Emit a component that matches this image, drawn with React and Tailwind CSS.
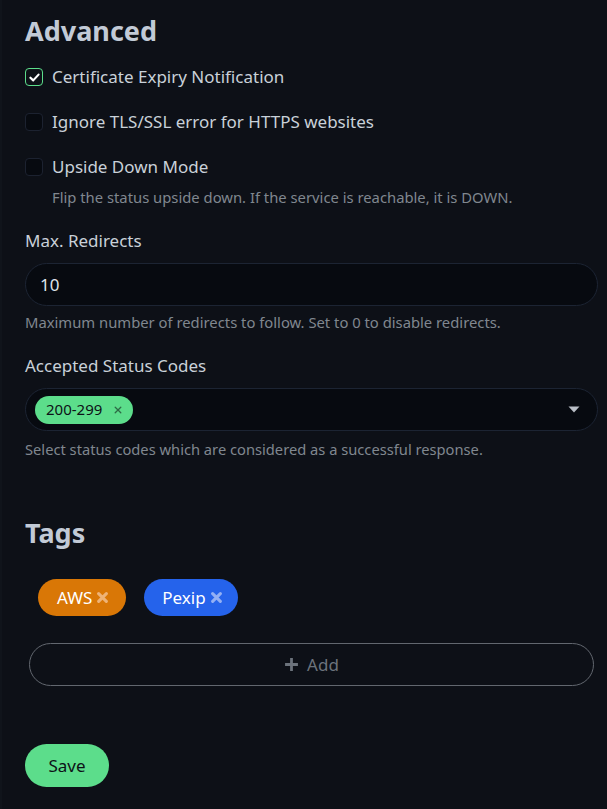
import React from "react";

function Check({ checked, label }) {
  return (
    <div className="flex items-center h-[24px]">
      <div
        className={
          "w-[18px] h-[18px] rounded-[4px] border flex items-center justify-center " +
          (checked ? "border-[#5cdd8b] bg-[#0d1117]" : "border-[#1c2230] bg-[#070a10]")
        }
      >
        {checked && (
          <svg width="11" height="9" viewBox="0 0 12 10">
            <path d="M1.5 5.2 L4.6 8.2 L10.5 1.8" fill="none" stroke="#ffffff" strokeWidth="2.4" strokeLinecap="round" strokeLinejoin="round" />
          </svg>
        )}
      </div>
      <span className="ml-[9px] text-[17px] leading-[24px] text-[#c9d1d9]">{label}</span>
    </div>
  );
}

function XIcon({ color, size = 10, w = 2.6 }) {
  return (
    <svg width={size} height={size} viewBox="0 0 10 10">
      <path d="M1.5 1.5 L8.5 8.5 M8.5 1.5 L1.5 8.5" stroke={color} strokeWidth={w} strokeLinecap="round" />
    </svg>
  );
}

export default function App() {
  return (
    <div
      className="w-[607px] h-[809px] bg-[#0d1017] border-l-2 border-[#10141b] overflow-hidden"
      style={{ fontFamily: '"Noto Sans", "Open Sans", sans-serif' }}
    >
      <div className="pl-[23px] pr-[9px]">
        <h4 className="pt-[11px] text-[27px] font-bold text-[#c2cad6] leading-[40px]">Advanced</h4>

        <div className="mt-[14px]">
          <Check checked label="Certificate Expiry Notification" />
        </div>
        <div className="mt-[21px]">
          <Check label="Ignore TLS/SSL error for HTTPS websites" />
        </div>
        <div className="mt-[21px]">
          <Check label="Upside Down Mode" />
          <div className="ml-[27px] mt-[8px] text-[14.8px] text-[#80878f] leading-[20px]">
            Flip the status upside down. If the service is reachable, it is DOWN.
          </div>
        </div>

        <div className="mt-[22px] text-[17px] text-[#c9d1d9] leading-[24px]">Max. Redirects</div>
        <div className="mt-[10px] h-[43px] rounded-full border border-[#1c2433] bg-[#070a10] flex items-center pl-[14px] text-[17px] text-[#dfe3ea]">
          10
        </div>
        <div className="mt-[6px] text-[14.8px] text-[#80878f] leading-[20px]">
          Maximum number of redirects to follow. Set to 0 to disable redirects.
        </div>

        <div className="mt-[22px] text-[17px] text-[#c9d1d9] leading-[24px]">Accepted Status Codes</div>
        <div className="mt-[10px] h-[43px] rounded-full border border-[#1c2433] bg-[#070a10] flex items-center pl-[9px] pr-[17px]">
          <div className="h-[28px] rounded-full bg-[#5cdd8b] flex items-center pl-[11px] pr-[11px] text-[15px] text-[#0d1117]">
            <span>200-299</span>
            <span className="ml-[12px]">
              <XIcon color="#2d6a45" size={8} w={1.6} />
            </span>
          </div>
          <div className="flex-1" />
          <svg width="12" height="7" viewBox="0 0 12 7">
            <path d="M0.5 0.5 L11.5 0.5 L6 6.5 Z" fill="#b9bec6" />
          </svg>
        </div>
        <div className="mt-[8px] text-[14.7px] text-[#80878f] leading-[20px]">
          Select status codes which are considered as a successful response.
        </div>

        <h4 className="mt-[54px] text-[27px] font-bold text-[#c2cad6] leading-[40px]">Tags</h4>

        <div className="mt-[26px] flex pl-[13px] gap-[18px]">
          <div className="h-[37px] rounded-full bg-[#d97706] flex items-center pl-[19px] pr-[18px] text-[17px] text-white">
            <span>AWS</span>
            <span className="ml-[5px]">
              <XIcon color="#eeb377" size={11} w={2.8} />
            </span>
          </div>
          <div className="h-[37px] rounded-full bg-[#2563eb] flex items-center pl-[18px] pr-[16px] text-[17px] text-white">
            <span>Pexip</span>
            <span className="ml-[5px]">
              <XIcon color="#93b0f4" size={11} w={2.8} />
            </span>
          </div>
        </div>

        <div className="mt-[27px] ml-[4px] mr-[4px] h-[43px] rounded-full border border-[#62676f] flex items-center justify-center text-[17px] text-[#6c737c]">
          <svg width="15" height="15" viewBox="0 0 14 14" className="mr-[8px]">
            <path d="M7 1 V13 M1 7 H13" stroke="#6c737c" strokeWidth="2.6" />
          </svg>
          Add
        </div>

        <button className="mt-[58px] h-[43px] w-[84px] rounded-full bg-[#5cdd8b] text-[17px] text-[#0d1117]">
          Save
        </button>
      </div>
    </div>
  );
}
